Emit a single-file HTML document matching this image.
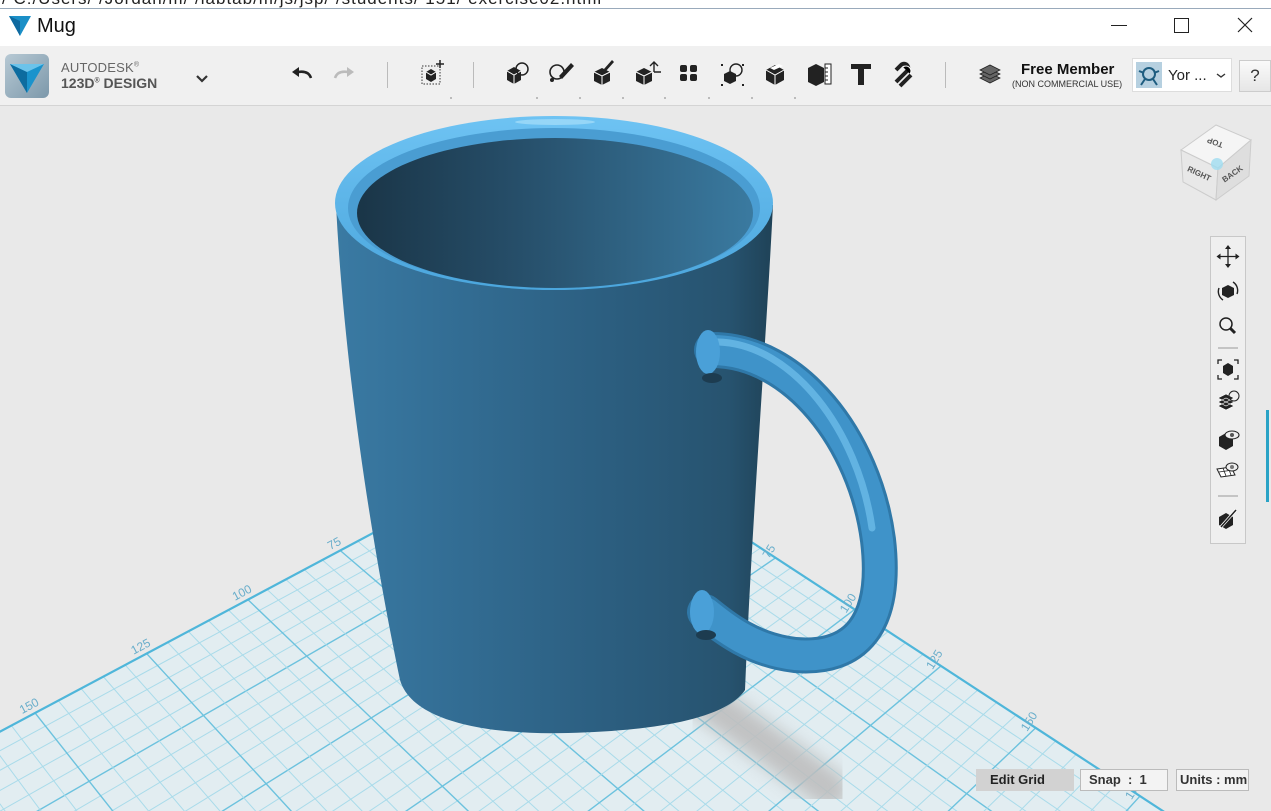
<!DOCTYPE html>
<html><head><meta charset="utf-8">
<style>
*{margin:0;padding:0;box-sizing:border-box}
html,body{width:1271px;height:811px;overflow:hidden}
body{background:#e9e9e9;font-family:"Liberation Sans",sans-serif;position:relative}
.abs{position:absolute}
#urlbar{left:0;top:0;width:1271px;height:9px;background:#fff;overflow:hidden;border-bottom:1px solid #9ab}
#urlbar span{position:absolute;top:-11px;left:2px;font-size:17px;color:#222;letter-spacing:1px;white-space:nowrap}
#title{left:0;top:9px;width:1271px;height:37px;background:#fff}
#tb{left:0;top:46px;width:1271px;height:60px;background:#f0f0f0;border-bottom:1px solid #d4d4d4}
.sep{position:absolute;top:16px;width:1px;height:26px;background:#bbb}
.ic{position:absolute;top:14px}
.btm{position:absolute;bottom:6px;width:2px;height:2px;background:#bbb}
</style></head><body>
<div id="urlbar" class="abs"><span>/ C:/Users/ /Jordan/m/ /labtab/m/js/jsp/ /students/ 151/ exercise02.html</span></div>
<div id="title" class="abs">
 <svg class="abs" style="left:8px;top:6px" width="24" height="22" viewBox="0 0 24 22"><path d="M1 1 L23 1 L12 21Z" fill="#1b8fc7"/><path d="M1 1 L12 6 L12 21Z" fill="#0f6aa0"/></svg>
 <span class="abs" style="left:37px;top:6px;font-size:20px;color:#111">Mug</span>
 <div class="abs" style="left:1111px;top:16px;width:16px;height:1px;background:#222"></div>
 <div class="abs" style="left:1174px;top:9px;width:15px;height:15px;border:1px solid #222"></div>
 <svg class="abs" style="left:1237px;top:8px" width="16" height="16"><path d="M1 1L15 15M15 1L1 15" stroke="#222" stroke-width="1.2"/></svg>
</div>
<div id="tb" class="abs">
 <div class="abs" style="left:5px;top:8px;width:44px;height:44px;border-radius:6px;background:linear-gradient(135deg,#b7c9d4,#7c98aa)"></div>
 <svg class="abs" style="left:9px;top:16px" width="36" height="32" viewBox="0 0 36 32"><path d="M1 2L35 2L18 31Z" fill="#1a93cc"/><path d="M1 2L18 10L18 31Z" fill="#0d6c9f"/><path d="M1 2L35 2L18 10Z" fill="#6cc3ea"/></svg>
 <div class="abs" style="left:61px;top:14px;font-size:13px;color:#666;letter-spacing:.2px">AUTODESK<sup style="font-size:7px">®</sup></div>
 <div class="abs" style="left:61px;top:29px;font-size:14px;color:#555;font-weight:bold">123D<sup style="font-size:7px">®</sup> DESIGN</div>
 <svg class="abs" style="left:195px;top:28px" width="14" height="10"><path d="M2 2L7 7L12 2" stroke="#333" stroke-width="2.2" fill="none"/></svg>
 <svg class="abs" style="left:290px;top:20px" width="24" height="16"><path d="M21 12C19 6 14 5 8 6" stroke="#222" stroke-width="2.5" fill="none"/><path d="M2 6L9 1L9 11Z" fill="#222"/></svg>
 <svg class="abs" style="left:332px;top:20px" width="24" height="16"><path d="M3 12C5 6 10 5 16 6" stroke="#bbb" stroke-width="2.5" fill="none"/><path d="M22 6L15 1L15 11Z" fill="#bbb"/></svg>
 <div class="sep" style="left:387px"></div>
 <svg class="ic" style="left:420px" width="26" height="26"><rect x="2" y="6" width="18" height="18" fill="none" stroke="#333" stroke-dasharray="1.5 1.5"/><path d="M6 12l5-3 5 3v7l-5 3-5-3z" fill="#222"/><path d="M6 12l5 3 5-3" stroke="#fff" fill="none"/><path d="M20 0v8M16 4h8" stroke="#222" stroke-width="1.5"/></svg>
 <div class="sep" style="left:473px"></div>
 <svg class="ic" style="left:504px" width="28" height="28"><path d="M3 11l7-4 7 4v9l-7 4-7-4z" fill="#222"/><path d="M3 11l7 4 7-4M10 15v9" stroke="#fff" fill="none"/><circle cx="18" cy="9" r="6" fill="none" stroke="#222" stroke-width="1.5"/></svg>
 <svg class="ic" style="left:547px" width="28" height="28"><circle cx="10" cy="12" r="7" fill="none" stroke="#222" stroke-width="1.6"/><path d="M12 16l12-13 3 3-12 13z" fill="#222"/><circle cx="5" cy="20" r="2" fill="#222"/></svg>
 <svg class="ic" style="left:590px" width="28" height="28"><path d="M4 12l8-4 8 4v9l-8 4-8-4z" fill="#222"/><path d="M4 12l8 4 8-4M12 16v9" stroke="#fff" fill="none"/><path d="M14 9l8-9 2 2-8 9z" fill="#222"/></svg>
 <svg class="ic" style="left:633px" width="28" height="28"><path d="M3 12l8-4 8 4v9l-8 4-8-4z" fill="#222"/><path d="M3 12l8 4 8-4M11 16v9" stroke="#fff" fill="none"/><path d="M21 2v10M21 12h7M17 6l4-4 4 4" stroke="#222" stroke-width="1.4" fill="none"/></svg>
 <svg class="ic" style="left:677px" width="26" height="26"><g fill="#222"><rect x="3" y="5" width="7" height="7" rx="2"/><rect x="13" y="5" width="7" height="7" rx="2"/><rect x="3" y="14" width="7" height="7" rx="2"/><rect x="13" y="14" width="7" height="7" rx="2"/></g></svg>
 <svg class="ic" style="left:720px" width="28" height="28"><path d="M4 14l6-3 6 3v7l-6 3-6-3z" fill="#222"/><circle cx="16" cy="10" r="6" fill="none" stroke="#222" stroke-width="1.4"/><g fill="#222"><rect x="1" y="4" width="2" height="2"/><rect x="22" y="4" width="2" height="2"/><rect x="1" y="24" width="2" height="2"/><rect x="22" y="24" width="2" height="2"/></g></svg>
 <svg class="ic" style="left:763px" width="28" height="28"><path d="M3 10l9-5 9 5v10l-9 5-9-5z" fill="#222"/><path d="M3 10l9 5 9-5M12 15v10" stroke="#fff" fill="none"/><path d="M7 8l9-4 4 2-9 4z" fill="#fff"/></svg>
 <svg class="ic" style="left:806px" width="28" height="28"><path d="M2 8l8-4 8 4v14l-8 4-8-4z" fill="#222"/><rect x="19" y="4" width="6" height="20" fill="#fff" stroke="#222"/><path d="M19 8h3M19 12h3M19 16h3M19 20h3" stroke="#222"/></svg>
 <svg class="ic" style="left:849px" width="24" height="26"><path d="M2 4h20v5h-7v16h-6V9H2z" fill="#222"/></svg>
 <svg class="ic" style="left:891px" width="28" height="28"><path d="M5 22L16 11a4 4 0 0 0-6-6L5 10" stroke="#222" stroke-width="4" fill="none"/><path d="M9 26L20 15" stroke="#222" stroke-width="4"/><path d="M12 7a5 5 0 0 1 7 7" stroke="#fff" stroke-width="1"/></svg>
 <div class="sep" style="left:945px"></div>
 <div class="btm" style="left:450px"></div><div class="btm" style="left:536px"></div><div class="btm" style="left:579px"></div><div class="btm" style="left:622px"></div><div class="btm" style="left:664px"></div><div class="btm" style="left:708px"></div><div class="btm" style="left:751px"></div><div class="btm" style="left:794px"></div>
 <svg class="ic" style="left:978px;top:16px" width="24" height="24"><g fill="#666" stroke="#222" stroke-width=".8"><path d="M2 16l10-5 10 5-10 5z"/><path d="M2 12l10-5 10 5-10 5z"/><path d="M2 8l10-5 10 5-10 5z"/></g></svg>
 <div class="abs" style="left:1021px;top:15px;font-size:15px;font-weight:bold;color:#111">Free Member</div>
 <div class="abs" style="left:1012px;top:33px;font-size:9px;color:#333">(NON COMMERCIAL USE)</div>
 <div class="abs" style="left:1132px;top:12px;width:100px;height:34px;background:#fff;border:1px solid #ddd"></div>
 <div class="abs" style="left:1136px;top:16px;width:26px;height:26px;background:#b6d0e0"></div>
 <svg class="abs" style="left:1137px;top:17px" width="24" height="24"><circle cx="12" cy="11" r="6" fill="none" stroke="#1e5d80" stroke-width="2"/><path d="M4 22l4-6M20 22l-4-6M2 8l5 2M22 8l-5 2" stroke="#1e5d80" stroke-width="2"/></svg>
 <div class="abs" style="left:1168px;top:21px;font-size:15px;color:#222">Yor ...</div>
 <svg class="abs" style="left:1216px;top:27px" width="10" height="6"><path d="M1 1L5 4L9 1" stroke="#333" stroke-width="1.4" fill="none"/></svg>
 <div class="abs" style="left:1239px;top:14px;width:32px;height:32px;border:1px solid #ccc;background:linear-gradient(#fafafa,#e6e6e6);font-size:17px;color:#333;text-align:center;line-height:30px">?</div>
</div>

<svg class="abs" style="left:0;top:106px" width="1271" height="705" viewBox="0 106 1271 705" id="scene">
 <defs>
  <linearGradient id="body" x1="0" x2="1" y1="0" y2="0">
   <stop offset="0" stop-color="#3a7aa3"/><stop offset=".25" stop-color="#336e95"/><stop offset=".6" stop-color="#2c5f81"/><stop offset=".9" stop-color="#27536f"/><stop offset="1" stop-color="#1f4257"/>
  </linearGradient>
  <linearGradient id="inner" x1="0" x2="1">
   <stop offset="0" stop-color="#1a3547"/><stop offset=".4" stop-color="#264e69"/><stop offset="1" stop-color="#3a7aa0"/>
  </linearGradient>
  <linearGradient id="rim" x1="0" x2="0" y1="0" y2="1"><stop offset="0" stop-color="#6ec3f3"/><stop offset="1" stop-color="#4ba6dd"/></linearGradient>
  <filter id="bl"><feGaussianBlur stdDeviation="9"/></filter>
  <filter id="bl2"><feGaussianBlur stdDeviation="2"/></filter>
 </defs>
 <g id="grid"></g>
 <path d="M705 700 L830 790" stroke="#bdbdbd" stroke-width="38" stroke-linecap="round" filter="url(#bl)" opacity=".9"/>
 <!-- body -->
 <path d="M336 205 C345 380 375 560 400 680 C413 725 500 735 568 733 C650 731 725 720 745 690 C752 520 765 360 773 205 Z" fill="url(#body)"/>
 <!-- rim -->
 <ellipse cx="554" cy="203" rx="219" ry="87" fill="url(#rim)"/>
 <ellipse cx="555" cy="122" rx="40" ry="3" fill="#a8defa" opacity=".7"/>
 <ellipse cx="554" cy="208" rx="206" ry="80" fill="#4a9dd2"/>
 <ellipse cx="555" cy="213" rx="198" ry="75" fill="url(#inner)"/>
 <!-- handle -->
 <path d="M712 350 C795 350 865 440 878 540 C888 625 855 660 795 655 C752 650 725 628 705 612" stroke="#2f78a8" stroke-width="36" fill="none" stroke-linecap="round"/>
 <path d="M712 350 C795 350 865 440 878 540 C888 625 855 660 795 655 C752 650 725 628 705 612" stroke="#3f93c9" stroke-width="30" fill="none" stroke-linecap="round"/>
 <path d="M718 342 C792 344 858 430 872 528" stroke="#6cbbe9" stroke-width="7" fill="none" stroke-linecap="round" opacity=".8"/>
 <ellipse cx="708" cy="352" rx="12" ry="22" fill="#4aa0d8"/>
 <ellipse cx="702" cy="612" rx="12" ry="22" fill="#4aa0d8"/>
 <ellipse cx="712" cy="378" rx="10" ry="5" fill="#1d3c50"/>
 <ellipse cx="706" cy="635" rx="10" ry="5" fill="#1d3c50"/>
</svg>

<!-- view cube -->
<svg class="abs" style="left:1176px;top:120px" width="80" height="84" viewBox="0 0 80 84">
 <path d="M5 30L40 5L75 20L42 48Z" fill="#f5f5f5" stroke="#ccc"/>
 <path d="M5 30L42 48L40 80L7 62Z" fill="#e8e8e8" stroke="#ccc"/>
 <path d="M42 48L75 20L73 56L40 80Z" fill="#dedede" stroke="#ccc"/>
 <circle cx="41" cy="44" r="6" fill="#9fdcf0" opacity=".8"/>
 <text x="40" y="20" font-size="8" font-weight="bold" fill="#555" transform="rotate(200 40 20)" text-anchor="middle">TOP</text>
 <text x="22" y="56" font-size="8" font-weight="bold" fill="#555" transform="rotate(25 22 56)" text-anchor="middle">RIGHT</text>
 <text x="58" y="56" font-size="8" font-weight="bold" fill="#555" transform="rotate(-35 58 56)" text-anchor="middle">BACK</text>
</svg>
<!-- nav bar -->
<div class="abs" style="left:1210px;top:236px;width:36px;height:308px;border:1px solid #c8c8c8;background:#efefef"></div>
<svg class="abs" style="left:1210px;top:236px" width="36" height="308">
 <g stroke="#222" fill="#222">
 <path d="M18 11v19M8.5 20.5h19" stroke-width="1.3"/><path d="M18 9l-3 4h6zM18 32l-3-4h6zM6.5 20.5l4-3v6zM29.5 20.5l-4-3v6z" stroke="none"/>
 <path d="M12 52l6-3 6 3v7l-6 3-6-3z" stroke="none"/><path d="M9 52a10 10 0 0 0 4 12M27 58a10 10 0 0 0-4-12" fill="none" stroke-width="1.4"/>
 <circle cx="16" cy="88" r="6" fill="none" stroke-width="1.5"/><path d="M20 92l5 5" stroke-width="3"/>
 <path d="M8 112h20" stroke="#999"/>
 <path d="M8 128v-4h4M24 124h4v4M28 139v4h-4M12 143h-4v-4" fill="none" stroke-width="1.3"/><path d="M13 130l5-3 5 3v7l-5 3-5-3z" stroke="none"/>
 <path d="M8 170l8-4 8 4-8 4zM8 166l8-4 8 4-8 4zM8 162l8-4 8 4-8 4z" stroke="#fff" stroke-width=".6"/><circle cx="24" cy="160" r="5" fill="none" stroke-width="1"/>
 <path d="M9 201l7-4 7 4v9l-7 4-7-4z" stroke="none"/><ellipse cx="22" cy="199" rx="7" ry="4" fill="#efefef" stroke-width="1.1"/><circle cx="22" cy="199" r="2" stroke="none" fill="#555"/>
 <path d="M7 233l14-2 4 8-14 2z" fill="#fff" stroke-width="1"/><path d="M9 236l14-2M13 232l3 8M18 231l3 8" stroke-width=".8"/><ellipse cx="22" cy="231" rx="6" ry="4" fill="#efefef" stroke-width="1"/><circle cx="22" cy="231" r="2" stroke="none" fill="#777"/>
 <path d="M8 260h20" stroke="#999"/>
 <path d="M9 281l7-4 7 4v8l-7 4-7-4z" stroke="none"/><path d="M10 292l16-18" stroke="#fff" stroke-width="3"/><path d="M11 291l15-17" stroke-width="1.5"/>
 </g>
</svg>
<div class="abs" style="left:1266px;top:410px;width:3px;height:92px;background:#2aa3c6"></div>

<!-- bottom controls -->
<div class="abs" style="left:976px;top:769px;width:98px;height:22px;background:#d2d2d2;font-size:13px;font-weight:bold;color:#222;line-height:22px;padding-left:14px">Edit Grid</div>
<div class="abs" style="left:1080px;top:769px;width:88px;height:22px;background:#f3f3f3;border:1px solid #bbb;font-size:13px;font-weight:bold;color:#333;line-height:20px;padding-left:8px">Snap &nbsp;: &nbsp;1</div>
<div class="abs" style="left:1176px;top:769px;width:73px;height:22px;background:#f3f3f3;border:1px solid #bbb;font-size:13px;font-weight:bold;color:#333;line-height:20px;padding-left:3px">Units : mm</div>

<script>
(function(){
 var O=[574,426];
 function unit(a,b){var l=Math.hypot(a,b);return [a/l,b/l];}
 var eu=unit(-539,287), ev=unit(468,306);
 var p=-0.00156,ku=3.118,q=-0.00150,kv=2.85;
 var U=[p*O[0]+ku*eu[0],p*O[1]+ku*eu[1]], V=[q*O[0]+kv*ev[0],q*O[1]+kv*ev[1]];
 function P(u,v){var w=1+p*u+q*v;return [(O[0]+u*U[0]+v*V[0])/w,(O[1]+u*U[1]+v*V[1])/w];}
 var M=240,s='';
 var c=[P(0,0),P(M,0),P(M,M),P(0,M)];
 s+='<path d="M'+c.map(function(a){return a[0].toFixed(1)+' '+a[1].toFixed(1)}).join('L')+'Z" fill="#e2edf1"/>';
 for(var i=5;i<=M;i+=5){
  var maj=i%25==0;
  var st=maj?'stroke="#6cc2de" stroke-width="1.4"':'stroke="#a9dbea" stroke-width="1"';
  var a=P(i,0),b=P(i,M);s+='<line x1="'+a[0]+'" y1="'+a[1]+'" x2="'+b[0]+'" y2="'+b[1]+'" '+st+'/>';
  a=P(0,i);b=P(M,i);s+='<line x1="'+a[0]+'" y1="'+a[1]+'" x2="'+b[0]+'" y2="'+b[1]+'" '+st+'/>';
 }
 var a=P(0,0),b=P(M,0);s+='<line x1="'+a[0]+'" y1="'+a[1]+'" x2="'+b[0]+'" y2="'+b[1]+'" stroke="#4fb6da" stroke-width="2.2"/>';
 b=P(0,M);s+='<line x1="'+a[0]+'" y1="'+a[1]+'" x2="'+b[0]+'" y2="'+b[1]+'" stroke="#4fb6da" stroke-width="2.2"/>';
 [75,100,125,150].forEach(function(n){var t=P(n,0);s+='<text x="'+(t[0]-2)+'" y="'+(t[1]-5)+'" font-size="12" fill="#6aaecb" text-anchor="middle" transform="rotate(-28 '+t[0]+' '+t[1]+')">'+n+'</text>';});
 [75,100,125,150,175].forEach(function(n){var t=P(0,n);s+='<text x="'+(t[0]+2)+'" y="'+(t[1]-5)+'" font-size="12" fill="#6aaecb" text-anchor="middle" transform="rotate(-58 '+t[0]+' '+t[1]+')">'+n+'</text>';});
 document.getElementById('grid').innerHTML=s;
})();
</script>
</body></html>
